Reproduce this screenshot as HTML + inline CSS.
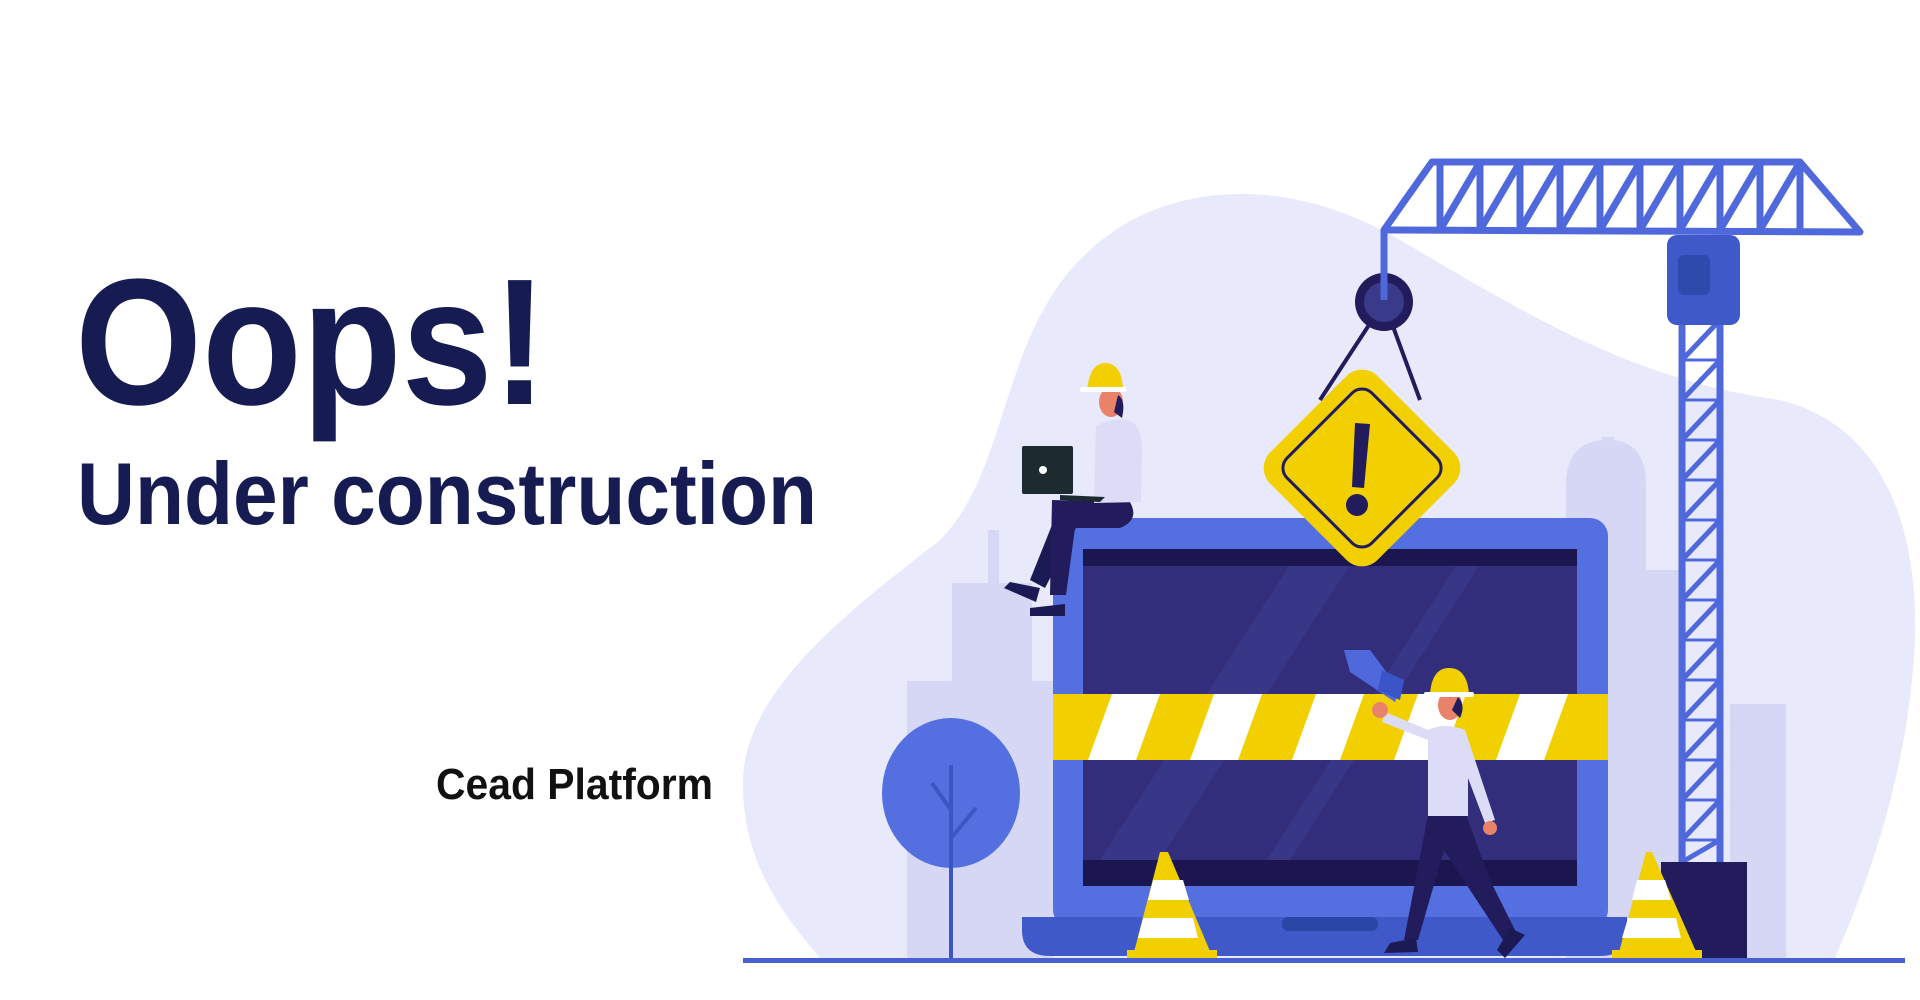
<!DOCTYPE html>
<html><head><meta charset="utf-8"><style>html,body{margin:0;padding:0;background:#fff;}svg{display:block}</style></head>
<body>
<svg width="1920" height="1000" viewBox="0 0 1920 1000" xmlns="http://www.w3.org/2000/svg">
<rect width="1920" height="1000" fill="#fff"/>
<!-- text -->
<text x="75" y="404" font-family="Liberation Sans, sans-serif" font-weight="bold" font-size="180" fill="#161c52" textLength="472" lengthAdjust="spacingAndGlyphs">Oops!</text>
<text x="77" y="524" font-family="Liberation Sans, sans-serif" font-weight="bold" font-size="88" fill="#161c52" textLength="740" lengthAdjust="spacingAndGlyphs">Under construction</text>
<text x="436" y="799" font-family="Liberation Sans, sans-serif" font-weight="bold" font-size="44" fill="#111" textLength="277" lengthAdjust="spacingAndGlyphs">Cead Platform</text>

<!-- blob -->
<path d="M743 780 C745 690 850 610 940 540 C1010 470 1000 330 1090 250 C1160 185 1280 170 1400 240 C1520 310 1630 380 1780 400 C1900 430 1925 560 1912 680 C1900 800 1860 900 1835 958 L820 958 C770 900 742 850 743 780 Z" fill="#e8e9fb"/>

<!-- buildings -->
<g fill="#d5d7f4">
<rect x="907" y="681" width="146" height="278"/>
<rect x="952" y="583" width="80" height="120"/>
<rect x="988" y="530" width="11" height="60"/>
<path d="M1566 485 Q1566 440 1608 440 Q1646 440 1646 485 L1646 959 L1566 959Z"/>
<rect x="1602" y="437" width="12" height="50"/>
<rect x="1730" y="704" width="56" height="255"/>
<rect x="1646" y="570" width="40" height="389"/>
</g>

<!-- tree -->
<ellipse cx="951" cy="793" rx="69" ry="75" fill="#5470e0"/>
<path d="M951 765 L951 960 M951 810 L932 783 M951 838 L976 808" stroke="#3e55c4" stroke-width="4" fill="none"/>

<!-- laptop -->
<rect x="1053" y="518" width="555" height="410" rx="18" fill="#5470e0"/>
<rect x="1083" y="549" width="494" height="337" fill="#332e7c"/>
<path d="M1083 886 L1300 549 L1360 549 L1143 886Z M1250 886 L1467 549 L1490 549 L1273 886Z" fill="#3a3a8a" opacity=".7"/>
<rect x="1083" y="549" width="494" height="17" fill="#1c1650"/>
<rect x="1083" y="860" width="494" height="26" fill="#1c1650"/>
<path d="M1022 917 L1627 917 L1627 930 Q1627 956 1600 956 L1050 956 Q1022 956 1022 930Z" fill="#3f5ac8"/>
<rect x="1282" y="917" width="96" height="14" rx="6" fill="#2a47a8"/>

<!-- hazard tape -->
<clipPath id="tp"><rect x="1053" y="694" width="555" height="66"/></clipPath>
<rect x="1053" y="694" width="555" height="66" fill="#f2d000"/>
<g clip-path="url(#tp)" fill="#fff">
<path d="M1088 760 L1112 694 L1160 694 L1136 760Z"/>
<path d="M1190 760 L1214 694 L1262 694 L1238 760Z"/>
<path d="M1292 760 L1316 694 L1364 694 L1340 760Z"/>
<path d="M1394 760 L1418 694 L1466 694 L1442 760Z"/>
<path d="M1496 760 L1520 694 L1568 694 L1544 760Z"/>
</g>

<!-- crane -->
<g stroke="#4f68dc" stroke-width="7" fill="none" stroke-linejoin="round">
<path d="M1384 230 L1432 162 L1800 162 L1860 232 Z"/>
<path d="M1440 162 L1440 230 M1480 162 L1480 230 M1520 162 L1520 230 M1560 162 L1560 230 M1600 162 L1600 230 M1640 162 L1640 230 M1680 162 L1680 230 M1720 162 L1720 230 M1760 162 L1760 230 M1800 162 L1800 230"/>
<path d="M1440 230 L1480 162 M1480 230 L1520 162 M1520 230 L1560 162 M1560 230 L1600 162 M1600 230 L1640 162 M1640 230 L1680 162 M1680 230 L1720 162 M1720 230 L1760 162 M1760 230 L1800 162"/>
<path d="M1682 320 L1682 862 M1720 320 L1720 862"/>
</g>
<path d="M1682 360 L1720 320 M1682 400 L1720 360 M1682 440 L1720 400 M1682 480 L1720 440 M1682 520 L1720 480 M1682 560 L1720 520 M1682 600 L1720 560 M1682 640 L1720 600 M1682 680 L1720 640 M1682 720 L1720 680 M1682 760 L1720 720 M1682 800 L1720 760 M1682 840 L1720 800 M1682 862 L1720 840" stroke="#4f68dc" stroke-width="5"/>
<path d="M1682 360 L1720 360 M1682 400 L1720 400 M1682 440 L1720 440 M1682 480 L1720 480 M1682 520 L1720 520 M1682 560 L1720 560 M1682 600 L1720 600 M1682 640 L1720 640 M1682 680 L1720 680 M1682 720 L1720 720 M1682 760 L1720 760 M1682 800 L1720 800 M1682 840 L1720 840" stroke="#4f68dc" stroke-width="3"/>
<rect x="1667" y="235" width="73" height="90" rx="10" fill="#3f5ac8"/>
<rect x="1678" y="255" width="32" height="40" rx="6" fill="#2f4aad"/>
<rect x="1661" y="862" width="86" height="96" fill="#221c5c"/>

<!-- pulley & ropes -->
<path d="M1384 302 L1320 400 M1384 302 L1420 400" stroke="#221c5c" stroke-width="4"/>
<circle cx="1384" cy="302" r="29" fill="#221c5c"/>
<circle cx="1384" cy="302" r="20" fill="#3a3a8a"/>
<path d="M1384 230 L1384 300" stroke="#4f68dc" stroke-width="7"/>

<!-- sign -->
<g transform="translate(1362 468) rotate(45)">
<rect x="-76" y="-76" width="152" height="152" rx="22" fill="#f2d000"/>
<rect x="-60" y="-60" width="120" height="120" rx="14" fill="none" stroke="#221c5c" stroke-width="3"/>
</g>
<path d="M1355 423 L1370 424 L1364 488 L1352 487Z" fill="#221c5c"/>
<circle cx="1357" cy="505" r="11" fill="#221c5c"/>

<!-- cones -->
<g>
<path d="M1168 852 L1160 852 L1133 956 L1212 956Z" fill="#f2d000"/>
<path d="M1153 880 L1183 880 L1189 900 L1148 900Z M1143 918 L1193 918 L1198 938 L1138 938Z" fill="#fff"/>
<rect x="1127" y="950" width="90" height="8" fill="#f2d000"/>
<path d="M1652 852 L1646 852 L1618 956 L1698 956Z" fill="#f2d000"/>
<path d="M1637 880 L1665 880 L1671 900 L1632 900Z M1628 918 L1676 918 L1681 938 L1622 938Z" fill="#fff"/>
<rect x="1612" y="950" width="90" height="8" fill="#f2d000"/>
</g>

<!-- ground -->
<rect x="743" y="958" width="1162" height="5" fill="#4a5fd0"/>

<!-- person 1 (sitting) -->
<g>
<path d="M1060 505 L1030 580 L1045 588 L1080 520Z" fill="#1c1a55"/>
<path d="M1052 500 L1130 502 Q1140 520 1120 528 L1075 528 L1066 595 L1050 595Z" fill="#221c5c"/>
<path d="M1010 582 L1040 588 L1036 602 L1004 588Z" fill="#1c1a55"/>
<path d="M1030 608 L1065 604 L1065 616 L1030 616Z" fill="#1c1a55"/>
<path d="M1096 426 Q1110 418 1128 420 Q1142 425 1142 450 L1141 502 L1094 503Z" fill="#dcdcf6"/>
<rect x="1022" y="446" width="51" height="48" rx="2" fill="#1d2a2f"/>
<circle cx="1043" cy="470" r="4" fill="#fff"/>
<path d="M1060 495 L1105 497 L1100 502 L1060 500Z" fill="#1d2a2f"/>
<ellipse cx="1111" cy="402" rx="12" ry="15" fill="#e8836a"/>
<path d="M1118 395 Q1126 400 1122 418 L1114 412Z" fill="#221c5c"/>
<path d="M1087 390 Q1090 363 1105 363 Q1122 363 1123 390Z" fill="#f2d000"/>
<rect x="1080" y="387" width="46" height="5" rx="2" fill="#fff"/>
</g>

<!-- person 2 (walking) -->
<g>
<path d="M1428 815 L1466 815 L1490 880 L1515 930 L1503 940 L1470 890 L1444 850 L1418 940 L1404 940Z" fill="#221c5c"/>
<path d="M1390 943 L1416 938 L1418 952 L1384 953Z" fill="#1c1a55"/>
<path d="M1510 928 L1525 935 L1505 958 L1497 950Z" fill="#1c1a55"/>
<path d="M1428 730 Q1445 722 1465 730 L1495 820 L1485 823 L1468 778 L1468 816 L1428 816 L1428 740 L1382 722 L1385 712Z" fill="#dcdcf6"/>
<circle cx="1490" cy="828" r="7" fill="#e8836a"/>
<circle cx="1380" cy="710" r="8" fill="#e8836a"/>
<path d="M1344 650 L1370 650 L1400 690 L1395 702 L1350 672Z" fill="#4f68dc"/>
<path d="M1382 670 L1404 680 L1400 700 L1378 690Z" fill="#3a55c8"/>
<ellipse cx="1450" cy="705" rx="12" ry="15" fill="#e8836a"/>
<path d="M1458 697 Q1466 705 1460 718 L1452 710Z" fill="#221c5c"/>
<path d="M1430 694 Q1432 668 1449 668 Q1467 668 1469 694Z" fill="#f2d000"/>
<rect x="1424" y="692" width="50" height="5" rx="2" fill="#fff"/>
</g>
</svg>
</body></html>
